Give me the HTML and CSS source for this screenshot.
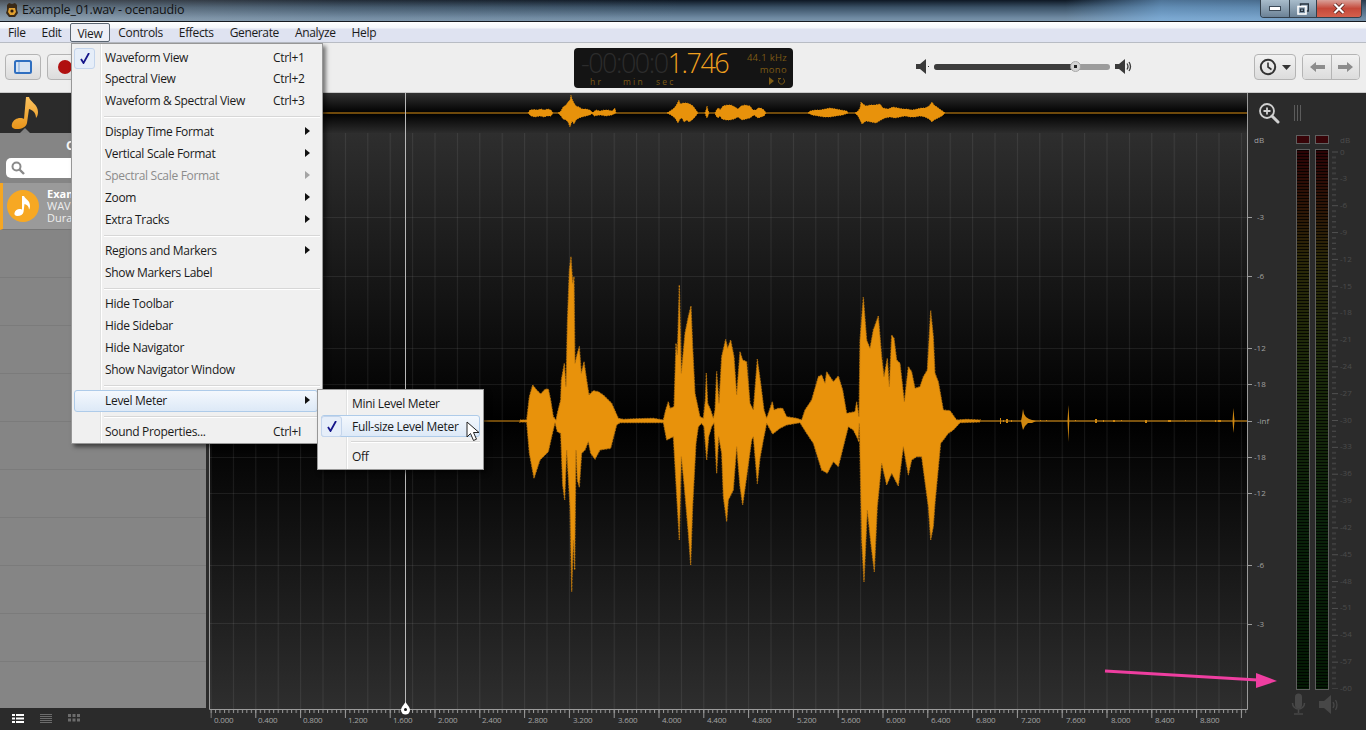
FILE: index.html
```html
<!DOCTYPE html>
<html lang="en">
<head>
<meta charset="utf-8">
<title>Example_01.wav - ocenaudio</title>
<link rel="stylesheet" href="styles.css">
</head>
<body>
<div class="app">
  <header class="titlebar">
    <svg class="app-logo" width="14" height="16" viewBox="0 0 14 16"><path d="M2 3l2-2 3 1 3-1 2 2v5l1 3-3 4H4l-3-4 1-3z" fill="#3a2a18"/><path d="M4 6h6l1 4-2 3H5l-2-3z" fill="#e0a030"/><circle cx="7" cy="9" r="1.6" fill="#2a1a10"/></svg>
    <span class="title-text">Example_01.wav - ocenaudio</span>
    <div class="win-controls">
      <div class="win-btn win-min"><svg width="12" height="6" viewBox="0 0 12 6"><rect x=".5" y=".5" width="11" height="4" fill="#fff" stroke="#3c4a58"/></svg></div>
      <div class="win-btn win-max"><svg width="12" height="12" viewBox="0 0 12 12"><path d="M3.5 3V1h8v7H9" fill="none" stroke="#26323e" stroke-width="1.4"/><rect x="1" y="3.5" width="8" height="7.5" fill="none" stroke="#fff" stroke-width="1.6"/><rect x="3.5" y="6" width="3" height="2.5" fill="none" stroke="#26323e"/></svg></div>
      <div class="win-btn win-close"><svg width="12" height="11" viewBox="0 0 12 11"><path d="M1.5 1l9 9M10.5 1l-9 9" stroke="#4a1a14" stroke-width="3.6"/><path d="M1.5 1l9 9M10.5 1l-9 9" stroke="#fff" stroke-width="2.2"/></svg></div>
    </div>
  </header>

  <nav class="menubar">
    <span class="mb-item">File</span>
    <span class="mb-item">Edit</span>
    <span class="mb-item mb-open">View</span>
    <span class="mb-item">Controls</span>
    <span class="mb-item">Effects</span>
    <span class="mb-item">Generate</span>
    <span class="mb-item">Analyze</span>
    <span class="mb-item">Help</span>
  </nav>

  <section class="toolbar">
    <button class="tb-btn tb-side"><svg width="18" height="14" viewBox="0 0 18 14"><rect x="1" y="1" width="16" height="12" rx="1.5" fill="#d8e4f2" stroke="#2f6fc0" stroke-width="2"/><path d="M5 2v10" stroke="#7aa4d8"/></svg></button>
    <button class="tb-btn tb-rec"><svg width="16" height="16" viewBox="0 0 16 16"><circle cx="8" cy="8" r="7" fill="#b01010"/></svg></button>
    <div class="timer">
      <div class="timer-main">
        <div class="timer-digits"><span class="d-dim">-00:00:0</span><span class="d-lit">1.746</span></div>
        <div class="timer-units"><span class="u-col">hr</span><span class="u-col">min</span><span>sec</span></div>
      </div>
      <div class="timer-info">
        <span>44.1 kHz</span>
        <span>mono</span>
        <svg width="18" height="8" viewBox="0 0 18 8"><path d="M0 0l5 4-5 4z" fill="#7c5a14"/><path d="M11 1.5a3 3 0 1 0 3 0M9 1.5h3" fill="none" stroke="#7c5a14"/></svg>
      </div>
    </div>
    <div class="volume">
      <svg width="14" height="15" viewBox="0 0 14 15"><path d="M0 5h4l6-5v15l-6-5H0z" fill="#3a3a3a"/><rect x="12" y="7" width="1" height="1" fill="#3a3a3a"/></svg>
      <div class="vol-track"><div class="vol-fill"></div><div class="vol-knob"></div></div>
      <svg width="17" height="15" viewBox="0 0 17 15"><path d="M0 5h4l6-5v15l-6-5H0z" fill="#3a3a3a"/><path d="M12 4.500q2 3 0 6M14 3q3 4.500 0 9" fill="none" stroke="#3a3a3a" stroke-width="1.300"/></svg>
    </div>
    <div class="tb-right">
      <button class="tb-btn tb-hist"><svg width="32" height="18" viewBox="0 0 32 18"><circle cx="9" cy="9" r="7.200" fill="none" stroke="#333" stroke-width="2"/><path d="M9 4.500V9l3.500 2.500" fill="none" stroke="#333" stroke-width="1.600"/><path d="M23 7h9l-4.500 5z" fill="#333"/></svg></button>
      <div class="nav-group">
        <button class="tb-nav"><svg width="15" height="10" viewBox="0 0 15 10"><path d="M0 5l6-5v3h9v4H6v3z" fill="#8c8c8c"/></svg></button>
        <button class="tb-nav"><svg width="15" height="10" viewBox="0 0 15 10"><path d="M15 5L9 0v3H0v4h9v3z" fill="#8c8c8c"/></svg></button>
      </div>
    </div>
  </section>

  <main class="main">
    <aside class="sidebar">
      <div class="side-head">
        <svg width="30" height="34" viewBox="0 0 30 34"><defs><linearGradient id="noteG" x1="0" y1="0" x2="0" y2="1"><stop offset="0" stop-color="#fbc360"/><stop offset="1" stop-color="#e8941a"/></linearGradient></defs><path d="M16 1h3c1 5 9 7 9 15 0 3-1 5-2 6 0-5-3-8-7-9l-2 14c-1 4-5 6-10 6-4 0-6-2-5-5 1-4 5-6 8-6 2 0 3 0 4 1z" fill="url(#noteG)"/></svg>
      </div>
      <div class="side-body">
        <div class="side-title">O</div>
        <div class="search"><svg width="14" height="14" viewBox="0 0 14 14"><circle cx="5.500" cy="5.500" r="4" fill="none" stroke="#8a8a8a" stroke-width="2"/><path d="M8.500 8.500l4.500 4.500" stroke="#8a8a8a" stroke-width="2.400"/></svg></div>
        <div class="file-row">
          <svg class="file-icon" width="32" height="32" viewBox="0 0 32 32"><circle cx="16" cy="16" r="16" fill="#f7a823"/><path d="M15 6h2c1 3 6 4 6 10 0 1.500-.5 3-1 3.500 0-3-2-5-4.500-5.500L16.500 22c-.5 2.500-3 4-6 4-2.500 0-3.500-1.500-3-3 .5-2.500 3-4 5-4 1 0 1.500 0 2.500.5z" fill="#fff"/></svg>
          <div class="file-text"><b>Exam</b><span>WAV</span><span>Dura</span></div>
        </div>
        <div class="side-list"></div>
      </div>
      <footer class="side-foot">
        <svg width="12" height="9" viewBox="0 0 12 9"><path d="M0 0h3v2H0zM4 0h8v2H4zM0 3.500h3v2H0zM4 3.500h8v2H4zM0 7h3v2H0zM4 7h8v2H4z" fill="#fff"/></svg>
        <svg width="12" height="9" viewBox="0 0 12 9"><path d="M0 .5h12M0 2.500h12M0 4.500h12M0 6.500h12M0 8.500h12" stroke="#6c6c6c"/></svg>
        <svg width="12" height="8" viewBox="0 0 12 8"><path d="M0 0h3v3H0zM4.500 0h3v3h-3zM9 0h3v3H9zM0 4.500h3v3H0zM4.500 4.500h3v3h-3zM9 4.500h3v3H9z" fill="#6c6c6c"/></svg>
      </footer>
    </aside>

    <svg class="wave" width="1039" height="637" viewBox="209 93 1039 637">
      <defs>
        <linearGradient id="navBg" x1="0" y1="0" x2="0" y2="1"><stop offset="0" stop-color="#323232"/><stop offset=".5" stop-color="#000"/><stop offset="1" stop-color="#2c2c2c"/></linearGradient>
        <linearGradient id="mainBg" x1="0" y1="0" x2="0" y2="1"><stop offset="0" stop-color="#2e2e2e"/><stop offset=".5" stop-color="#000"/><stop offset="1" stop-color="#2e2e2e"/></linearGradient>
        <pattern id="gridV" patternUnits="userSpaceOnUse" x="210.500" y="0" width="22.400" height="20"><path d="M.5 0v20" stroke="#fff" stroke-opacity=".08"/></pattern>
        <pattern id="ticksMinor" patternUnits="userSpaceOnUse" x="210.500" y="710" width="4.480" height="3"><rect width="1" height="3" fill="#9a9a9a"/></pattern>
        <pattern id="ticksMajor" patternUnits="userSpaceOnUse" x="210.500" y="710" width="44.800" height="8"><rect width="1" height="8" fill="#9a9a9a"/></pattern>
        <path id="wv" d="M0 540L20 540 28 470 38 435 50 450 62 462 75 448 85 447 92 480 100 530 108 540 112 520 122 480 124 420 133 370 138 440 142 250 148 90 153 50 158 130 162 110 165 370 172 340 178 320 184 400 192 365 200 420 207 465 220 452 235 455 250 465 275 490 295 535 310 538 350 536 400 535 430 540 437 510 445 485 450 505 462 500 468 310 472 345 478 135 484 400 495 280 505 230 513 198 518 320 525 460 540 530 550 535 556 480 559 400 563 490 572 510 580 535 585 510 590 395 597 490 605 350 617 298 623 325 632 300 642 350 650 465 660 335 668 360 680 365 690 490 700 510 712 358 722 430 732 510 740 535 757 485 762 510 775 505 788 505 800 530 830 535 845 540 855 510 875 480 895 410 905 405 915 430 920 395 940 425 955 408 968 450 980 520 1005 515 1010 485 1017 530 1020 300 1030 172 1040 300 1050 325 1060 270 1075 228 1085 350 1092 410 1102 355 1108 440 1115 285 1122 295 1130 360 1140 370 1153 485 1165 380 1175 395 1185 445 1200 440 1210 410 1222 390 1232 212 1240 290 1245 400 1255 425 1270 510 1290 512 1310 540 1340 538 1380 540L1380 546 1320 548 1300 570 1285 580 1270 600 1262 610 1245 790 1240 860 1232 900 1225 800 1205 650 1190 650 1175 660 1165 705 1150 620 1135 738 1115 700 1100 735 1085 670 1072 800 1063 995 1052 905 1042 810 1032 1025 1025 900 1018 550 1015 600 1000 570 985 560 975 600 955 680 940 665 922 700 905 690 880 610 860 580 840 548 800 555 780 565 758 582 740 550 730 600 720 655 712 730 700 590 695 600 680 710 668 795 660 740 650 620 640 750 625 780 620 845 610 770 605 640 596 590 590 700 582 548 575 560 566 590 560 660 552 560 545 550 535 560 528 610 518 800 512 975 505 880 492 730 484 650 478 900 470 765 460 590 440 600 430 548 300 548 290 555 272 625 240 630 225 658 212 640 205 605 195 630 185 640 178 742 172 720 168 630 164 990 160 900 155 1055 150 800 140 630 134 780 128 735 122 580 112 575 105 548 95 590 85 635 60 660 42 715 28 640 20 546 0 546z"/>
      </defs>
      <rect x="209" y="93" width="1039" height="637" fill="#2b2b2b"/>
      <rect x="210" y="93" width="1037" height="40" fill="url(#navBg)"/>
      <rect x="210" y="133" width="1037" height="576" fill="url(#mainBg)"/>
      <rect x="210" y="133" width="1037" height="576" fill="url(#gridV)"/>
      <path class="grid-h" d="M210 217.500h1037M210 276.500h1037M210 348.500h1037M210 384.500h1037M210 457.500h1037M210 493.500h1037M210 565.500h1037M210 623.500h1037"/>

      <path class="nav-line" d="M210 113h1037"/>
      <g class="nav-blobs">
        <path d="M528 113L530 110 534 109.500 537 110 541 109 544 110 548 109 551 110 553 113 551 116 547 116 544 117 540 116 535 117 531 116z"/>
        <path d="M558 113L561 111 563 107 566 105 568 102 570 100 571 95 572 99 574 103 576 106 579 107 582 109 586 109 590 110 593 113 590 115 586 116 582 117 579 118 576 120 574 124 572 121 570 127 568 122 566 120 563 119 561 116z"/>
        <path d="M592 113L596 110 600 111 604 110 608 110 612 111 615 108 616 113 612 115 606 116 600 115 594 116z"/>
        <path d="M667 113L670 111 673 109 675 107 677 104 679 100 680 104 683 103 687 103 690 104 693 106 696 110 698 113 695 117 692 120 689 122 687 120 684 122 682 118 680 119 678 123 675 118 671 115z"/>
        <path d="M705 113L706 110 707 106 708 110 709 113 708 116 707 118 706 116z"/>
        <path d="M715 113L717 109 719 108 720 110 723 106 727 105 731 105 735 107 738 109 741 106 745 105 750 106 753 110 756 110 758 108 761 108 764 110 766 113 764 116 761 117 758 118 754 115 750 118 746 119 742 120 738 117 734 119 730 120 726 120 722 119 720 116 718 118 716 116z"/>
        <path d="M808 113L810 111 815 110 820 110 825 109 830 108 836 109 841 110 847 111 848 113 843 115 836 116 830 117 824 117 818 116 812 115z"/>
        <path d="M855 113L858 111 860 108 861 102 863 104 866 106 870 105 875 105 880 104 883 108 888 109 893 107 898 108 903 109 907 109 912 110 917 109 921 108 925 108 929 106 932 102 934 105 937 107 941 110 944 112 945 113 942 116 938 118 934 120 932 122 929 119 925 117 920 116 915 117 910 117 905 116 900 117 895 118 890 117 885 118 881 120 876 123 871 122 866 121 862 124 860 120 858 116z"/>
      </g>

      <path class="nav-line" d="M484 421h36"/>
      <path class="wave-line" d="M520 421h727"/>
      <g transform="translate(520 240) scale(.33333)">
        <use href="#wv" class="wave-fill"/>
        <use href="#wv" class="wave-fuzz"/>
      </g>
      <path class="wave-bits" d="M961 420h1v2h-1zM964 420.500h8v1h-8zM974 420h1v2h-1zM1000 418h1v6h-1zM1003 420h1v2h-1zM1006 419h2v4h-2zM1011 420h1v2h-1zM1021 421L1022 416 1023 409 1024 414 1026 417 1029 419 1032 420 1036 421 1032 423 1028 423 1025 426 1023 430 1022 426zM1040 420h1v1h-1zM1046 420h1v1h-1zM1067.500 421L1068.400 405 1069.300 421 1068.400 442zM1075 420h1v1h-1zM1095 419h2v4h-2zM1103 420h1v2h-1zM1113 420h2v2h-2zM1121 420h1v1h-1zM1145 420h2v3h-2zM1168 420h3v2h-3zM1185 420h1v1h-1zM1200 420h1v1h-1zM1215 420h1v2h-1zM1218 420h3v2h-3zM1232.500 421L1233.400 408 1234.500 421 1233.400 433z"/>

      <path class="axis" d="M209.500 93v616.500h1038M1247.500 93v616.500"/>
      <rect x="210.500" y="710" width="1036" height="3" fill="url(#ticksMinor)"/>
      <rect x="210.500" y="710" width="1036" height="8" fill="url(#ticksMajor)"/>

      <g class="ruler-text">
        <text x="214" y="723">0.000</text><text x="258" y="723">0.400</text><text x="303" y="723">0.800</text><text x="348" y="723">1.200</text><text x="393" y="723">1.600</text><text x="438" y="723">2.000</text><text x="482" y="723">2.400</text><text x="528" y="723">2.800</text><text x="573" y="723">3.200</text><text x="618" y="723">3.600</text><text x="662" y="723">4.000</text><text x="707" y="723">4.400</text><text x="752" y="723">4.800</text><text x="797" y="723">5.200</text><text x="841" y="723">5.600</text><text x="886" y="723">6.000</text><text x="931" y="723">6.400</text><text x="976" y="723">6.800</text><text x="1021" y="723">7.200</text><text x="1066" y="723">7.600</text><text x="1111" y="723">8.000</text><text x="1155" y="723">8.400</text><text x="1200" y="723">8.800</text>
      </g>

      <path class="playhead" d="M405.500 93v610"/>
      <path d="M405.500 702c3 4 4.500 6 4.500 8a4.500 4.500 0 0 1-9 0c0-2 1.500-4 4.500-8z" fill="#fff"/>
      <circle cx="405.500" cy="709.500" r="1.500" fill="#111"/>
    </svg>

    <aside class="meter">
      <div class="meter-tools">
        <svg width="22" height="22" viewBox="0 0 22 22"><circle cx="9" cy="9" r="7" fill="none" stroke="#d0d0d0" stroke-width="1.800"/><path d="M9 5.500v7M5.500 9h7" stroke="#d0d0d0" stroke-width="1.800"/><path d="M14 14l6 6" stroke="#d0d0d0" stroke-width="3" stroke-linecap="round"/></svg>
        <svg width="7" height="16" viewBox="0 0 7 16"><path d="M.5 0v16M3.500 0v16M6.500 0v16" stroke="#5c5c5c"/></svg>
      </div>
      <svg class="meter-svg" width="118" height="597" viewBox="1248 133 118 597">
        <defs>
          <linearGradient id="ledG" x1="0" y1="0" x2="0" y2="1"><stop offset="0" stop-color="#2c0306"/><stop offset=".1" stop-color="#2e1406"/><stop offset=".2" stop-color="#2c2808"/><stop offset=".4" stop-color="#1c2a0a"/><stop offset=".7" stop-color="#0a220a"/><stop offset="1" stop-color="#041a04"/></linearGradient>
          <pattern id="ledStripes" patternUnits="userSpaceOnUse" x="0" y="150" width="10" height="3"><rect width="10" height="1" fill="#000" fill-opacity=".8"/></pattern>
          <pattern id="scaleTicks" patternUnits="userSpaceOnUse" x="1332" y="151.500" width="8" height="26.850"><path d="M0 .5h6M0 5.870h4M0 11.240h4M0 16.610h4M0 21.980h4" stroke="#505050"/></pattern>
        </defs>
        <path class="tick-l" d="M1248 217.500h4M1248 276.500h4M1248 348.500h4M1248 384.500h4M1248 421.500h4M1248 457.500h4M1248 493.500h4M1248 565.500h4M1248 624.500h4"/>
        <g class="db-l">
          <text x="1254" y="143">dB</text><text x="1257" y="220">-3</text><text x="1257" y="279">-6</text><text x="1254" y="351">-12</text><text x="1254" y="387">-18</text><text x="1257" y="424">-inf</text><text x="1254" y="460">-18</text><text x="1254" y="496">-12</text><text x="1257" y="568">-6</text><text x="1257" y="627">-3</text>
        </g>
        <rect class="clip" x="1296.500" y="135.500" width="13" height="8"/>
        <rect class="clip" x="1315.500" y="135.500" width="13" height="8"/>
        <rect class="bar" x="1296.500" y="149.500" width="13" height="540" fill="url(#ledG)"/>
        <rect class="bar" x="1315.500" y="149.500" width="13" height="540" fill="url(#ledG)"/>
        <rect x="1297" y="150" width="12" height="539" fill="url(#ledStripes)"/>
        <rect x="1316" y="150" width="12" height="539" fill="url(#ledStripes)"/>
        <rect x="1332" y="151" width="8" height="538" fill="url(#scaleTicks)"/>
        <g class="db-r">
          <text x="1340" y="143">dB</text><text x="1340" y="155">0</text><text x="1340" y="181">-3</text><text x="1340" y="208">-6</text><text x="1340" y="235">-9</text><text x="1340" y="262">-12</text><text x="1340" y="289">-15</text><text x="1340" y="315">-18</text><text x="1340" y="342">-21</text><text x="1340" y="369">-24</text><text x="1340" y="396">-27</text><text x="1340" y="423">-30</text><text x="1340" y="449">-33</text><text x="1340" y="476">-36</text><text x="1340" y="503">-39</text><text x="1340" y="530">-42</text><text x="1340" y="557">-45</text><text x="1340" y="584">-48</text><text x="1340" y="610">-51</text><text x="1340" y="637">-54</text><text x="1340" y="664">-57</text><text x="1340" y="691">-60</text>
        </g>
        <path d="M1295 697a3.500 3.500 0 0 1 7 0v8a3.500 3.500 0 0 1-7 0z" fill="#474747"/>
        <path d="M1292.500 703a6 6 0 0 0 12 0M1298.500 709v4M1294 714h9" fill="none" stroke="#474747" stroke-width="1.500"/>
        <path d="M1319 701h5l7-6v19l-7-6h-5z" fill="#474747"/>
        <path d="M1333 702q2 3 0 6M1335.500 700q3 5 0 10" fill="none" stroke="#474747" stroke-width="1.300"/>
      </svg>
    </aside>
  </main>

  <div class="menu menu-view">
    <div class="mi"><span class="mi-check"><svg width="10" height="11" viewBox="0 0 10 11"><path d="M1 6l2.500 4L9 0" fill="none" stroke="#16168a" stroke-width="1.800"/></svg></span><span class="mi-label">Waveform View</span><span class="mi-key">Ctrl+1</span></div>
    <div class="mi"><span class="mi-gap"></span><span class="mi-label">Spectral View</span><span class="mi-key">Ctrl+2</span></div>
    <div class="mi"><span class="mi-gap"></span><span class="mi-label">Waveform &amp; Spectral View</span><span class="mi-key">Ctrl+3</span></div>
    <div class="sep"></div>
    <div class="mi"><span class="mi-gap"></span><span class="mi-label">Display Time Format</span><span></span><i class="arrow"></i></div>
    <div class="mi"><span class="mi-gap"></span><span class="mi-label">Vertical Scale Format</span><span></span><i class="arrow"></i></div>
    <div class="mi mi-off"><span class="mi-gap"></span><span class="mi-label">Spectral Scale Format</span><span></span><i class="arrow"></i></div>
    <div class="mi"><span class="mi-gap"></span><span class="mi-label">Zoom</span><span></span><i class="arrow"></i></div>
    <div class="mi"><span class="mi-gap"></span><span class="mi-label">Extra Tracks</span><span></span><i class="arrow"></i></div>
    <div class="sep"></div>
    <div class="mi"><span class="mi-gap"></span><span class="mi-label">Regions and Markers</span><span></span><i class="arrow"></i></div>
    <div class="mi"><span class="mi-gap"></span><span class="mi-label">Show Markers Label</span></div>
    <div class="sep"></div>
    <div class="mi"><span class="mi-gap"></span><span class="mi-label">Hide Toolbar</span></div>
    <div class="mi"><span class="mi-gap"></span><span class="mi-label">Hide Sidebar</span></div>
    <div class="mi"><span class="mi-gap"></span><span class="mi-label">Hide Navigator</span></div>
    <div class="mi"><span class="mi-gap"></span><span class="mi-label">Show Navigator Window</span></div>
    <div class="sep"></div>
    <div class="mi mi-hot"><span class="mi-gap"></span><span class="mi-label">Level Meter</span><span></span><i class="arrow"></i></div>
    <div class="sep"></div>
    <div class="mi"><span class="mi-gap"></span><span class="mi-label">Sound Properties...</span><span class="mi-key">Ctrl+I</span></div>
  </div>

  <div class="menu menu-sub">
    <div class="mi"><span class="mi-gap"></span><span class="mi-label">Mini Level Meter</span></div>
    <div class="mi mi-hot"><span class="mi-check"><svg width="10" height="11" viewBox="0 0 10 11"><path d="M1 6l2.500 4L9 0" fill="none" stroke="#16168a" stroke-width="1.800"/></svg></span><span class="mi-label">Full-size Level Meter</span></div>
    <div class="sep"></div>
    <div class="mi"><span class="mi-gap"></span><span class="mi-label">Off</span></div>
  </div>

  <svg class="cursor" width="14" height="21" viewBox="0 0 14 21"><path d="M1 1v15l3.500-3.500 3 7 3-1.300-3-6.700H13z" fill="#fff" stroke="#222"/></svg>
  <svg class="pink-arrow" width="174" height="24" viewBox="0 0 174 24"><path d="M1 4l153 9" stroke="#ee3ea0" stroke-width="3"/><path d="M152 6l21 8-21 7z" fill="#ee3ea0"/></svg>
</div>
</body>
</html>
```

FILE: styles.css
```css
* { box-sizing: border-box; }
html, body { margin: 0; padding: 0; height: 100%; overflow: hidden; background: #2b2b2b; }
body { font-family: "Open Sans", "Noto Sans", sans-serif; font-size: 12px; color: #1a1a1a; }
svg { display: block; flex: none; }
button { padding: 0; font: inherit; }

.app { position: relative; width: 1366px; height: 730px; display: flex; flex-direction: column; overflow: hidden; }

/* title bar */
.titlebar {
  height: 22px; flex: none; display: flex; align-items: center; padding-left: 5px;
  border-bottom: 1px solid #15191f;
  background:
    linear-gradient(90deg, rgba(190,190,190,.35) 0, rgba(150,160,170,.15) 25%, rgba(0,0,0,0) 50%, rgba(120,190,250,0) 78%, rgba(130,190,245,.55) 85%, rgba(130,190,245,.5) 92%, rgba(100,130,160,.3) 100%),
    linear-gradient(180deg, #0e1824 0, #3a5166 35%, #6f8aa2 85%, #7a94aa 100%);
}
.app-logo { margin-right: 3px; margin-top: -2px; }
.title-text { font-size: 12.5px; letter-spacing: -.2px; color: #111; margin-top: -2px; }
.win-controls { margin-left: auto; margin-right: 4px; align-self: flex-start; display: flex; height: 18px; border: 1px solid #33404c; border-top: 0; border-radius: 0 0 4px 4px; overflow: hidden; }
.win-btn { display: flex; align-items: center; justify-content: center; height: 17px; border-right: 1px solid #33404c; }
.win-min { width: 29px; background: linear-gradient(180deg, #a8bccb, #6c8296); }
.win-max { width: 27px; background: linear-gradient(180deg, #a8bccb, #6c8296); }
.win-close { width: 44px; border-right: 0; background: linear-gradient(180deg, #d9a199 0, #c5493a 50%, #d4604c 100%); }

/* menu bar */
.menubar {
  height: 21px; flex: none; display: flex; align-items: center;
  border-bottom: 1px solid #b8bcc4;
  background: linear-gradient(180deg, #fff 0, #f4f6fa 30%, #dfe3f1 35%, #dfe3f1 100%);
}
.mb-item { padding: 0 8px; line-height: 19px; height: 19px; letter-spacing: -.35px; margin-top: 1px; white-space: nowrap; }
.mb-open { border: 1px solid #5b6672; border-radius: 2px; background: #eef0f6; padding: 0 7px; }

/* toolbar */
.toolbar { height: 50px; flex: none; display: flex; align-items: center; padding: 0 0 2px 5px; background: #eeeeee; border-bottom: 1px solid #c9c9c9; }
.tb-btn { display: flex; align-items: center; justify-content: center; height: 26px; border: 1px solid #b4b4b4; border-radius: 4px; background: linear-gradient(180deg, #f2f2f2, #dcdcdc); }
.tb-side { width: 36px; }
.tb-rec { width: 36px; margin-left: 6px; }
.timer { width: 219px; height: 40px; margin-left: 491px; margin-top: 2px; padding: 0 6px 0 7px; display: flex; justify-content: space-between; border-radius: 4px; background: #141414; }
.timer-main { display: flex; flex-direction: column; }
.timer-digits { height: 29px; font-size: 27px; font-weight: 300; line-height: 29px; letter-spacing: -1.5px; white-space: nowrap; }
.d-dim { color: #2c2c2c; }
.d-lit { color: #f0a01e; }
.timer-units { display: flex; font-size: 8.5px; line-height: 9px; letter-spacing: 2.2px; color: #7c5a14; padding-left: 9px; }
.u-col { width: 33px; }
.timer-info { display: flex; flex-direction: column; align-items: flex-end; padding-top: 4px; font-size: 9.5px; line-height: 12px; letter-spacing: .3px; color: #7c5a14; }
.timer-info svg { margin-top: 1px; }
.volume { margin-left: 123px; display: flex; align-items: center; gap: 4px; }
.vol-track { position: relative; width: 176px; height: 6px; margin-right: 1px; border-radius: 3px; background: #9c9c9c; }
.vol-fill { width: 141px; height: 6px; border-radius: 3px; background: #3c3c3c; }
.vol-knob { position: absolute; left: 136px; top: -3px; width: 11px; height: 11px; border-radius: 50%; border: 1px solid #a6a6a6; background: radial-gradient(circle, #222 0 1.500px, #d4d4d4 2px); }
.tb-right { margin-left: auto; padding-right: 6px; display: flex; align-items: center; gap: 6px; }
.tb-hist { width: 42px; }
.nav-group { display: flex; height: 26px; border: 1px solid #b4b4b4; border-radius: 4px; overflow: hidden; }
.tb-nav { width: 28px; display: flex; align-items: center; justify-content: center; border: 0; background: linear-gradient(180deg, #f2f2f2, #dcdcdc); }
.tb-nav + .tb-nav { border-left: 1px solid #b4b4b4; }

/* main */
.main { flex: 1; display: flex; min-height: 0; background: #2b2b2b; }
.sidebar { width: 209px; flex: none; display: flex; flex-direction: column; background: #2b2b2b; }
.side-head { position: relative; height: 40px; flex: none; display: flex; justify-content: flex-start; align-items: center; padding-left: 10px; background: #2b2b2b; margin-right: 3px; }
.side-head::after { content: ""; position: absolute; left: 20px; bottom: 0; border: 5px solid transparent; border-top: 0; border-bottom-color: #828282; }
.side-body { flex: 1; display: flex; flex-direction: column; margin-right: 3px; background: #858585; min-height: 0; }
.side-title { height: 25px; flex: none; line-height: 25px; padding-left: 66px; font-weight: 700; color: #f4f4f4; }
.search { height: 20px; flex: none; margin: 0 6px; padding: 3px 5px; border-radius: 5px; background: #fff; }
.file-row { height: 47px; flex: none; margin-top: 5px; display: flex; align-items: center; gap: 8px; padding-left: 7px; border-left: 3px solid #f5a623; border-bottom: 1px solid #777; background: #9a9a9a; }
.file-icon { margin-left: -3px; }
.file-text { display: flex; flex-direction: column; font-size: 11px; line-height: 12px; color: #eeeeee; }
.file-text b { color: #fff; }
.side-list { flex: 1; background: repeating-linear-gradient(180deg, #858585 0, #858585 47px, #7b7b7b 47px, #7b7b7b 48px); }
.side-foot { height: 22px; flex: none; display: flex; align-items: center; gap: 16px; padding: 0 0 2px 12px; background: #2b2b2b; margin-right: -3px; }

.wave { flex: none; }
.grid-h { stroke: #fff; stroke-opacity: .08; fill: none; }
.nav-line { stroke: #94620f; stroke-width: 1.600; fill: none; }
.nav-blobs path { fill: #e8920b; stroke: #e8920b; stroke-width: 1; stroke-dasharray: .8 1.700; }
.wave-line { stroke: #a36e14; stroke-width: 1.300; fill: none; }
.wave-fill { fill: #e8920b; stroke: #a86c10; stroke-width: 1.500; }
.wave-fuzz { fill: none; stroke: #d08410; stroke-width: 4; stroke-dasharray: 1.500 7; }
.wave-bits { fill: #d08810; }
.axis { fill: none; stroke: #9a9a9a; }
.ruler-text text { font-family: "Open Sans", sans-serif; font-size: 8px; letter-spacing: -.2px; fill: #a4a4a4; }
.playhead { stroke: #b8b8b8; fill: none; }

.meter { flex: 1; display: flex; flex-direction: column; background: #2b2b2b; }
.meter-tools { height: 40px; flex: none; display: flex; align-items: center; gap: 14px; padding: 0 0 0 10px; }
.tick-l { stroke: #9a9a9a; fill: none; }
.db-l text { font-family: "Open Sans", sans-serif; font-size: 8px; fill: #a0a0a0; }
.db-r text { font-family: "Open Sans", sans-serif; font-size: 8px; fill: #4c4c4c; }
.clip { fill: #380408; stroke: #5e5e5e; }
.bar { stroke: #5e5e5e; }

/* menus */
.menu { position: absolute; background: #f0f0f0; border: 1px solid #979797; box-shadow: 3px 3px 4px rgba(0,0,0,.5); color: #1a1a1a; }
.menu-view { left: 71px; top: 43px; width: 252px; height: 401px; padding: 2px 2px 0; background: linear-gradient(90deg, #f0f0f0 0, #f0f0f0 28px, #e0e1e1 28px, #e0e1e1 29px, #fff 29px, #fff 30px, #f0f0f0 30px); }
.menu-sub { left: 317px; top: 389px; width: 167px; height: 81px; padding: 3px 3px 0; background: linear-gradient(90deg, #f0f0f0 0, #f0f0f0 28px, #e0e1e1 28px, #e0e1e1 29px, #fff 29px, #fff 30px, #f0f0f0 30px); }
.mi { position: relative; height: 22px; padding-bottom: 2px; display: grid; grid-template-columns: 31px 168px 32px 8px; align-items: center; white-space: nowrap; letter-spacing: -.31px; }
.menu-sub .mi { grid-template-columns: 31px 1fr; }
.mi-gap { display: block; }
.mi-check { width: 21px; height: 21px; margin-top: 2px; display: flex; align-items: center; justify-content: center; border: 1px solid #c4d5ec; border-radius: 3px; background: #e6eef9; }
.mi-off { color: #8c8c8c; }
.mi-hot { border: 1px solid #aecbe9; border-radius: 3px; background: linear-gradient(180deg, #f4f8fd, #dde9f7); margin-right: 2px; padding-bottom: 2px; grid-template-columns: 30px 168px 32px 8px; }
.menu-sub .mi-hot { margin-right: 0; grid-template-columns: 30px 1fr; }
.menu-sub .mi-hot .mi-check { margin: 0 0 0 -1px; }
.arrow { display: block; width: 0; height: 0; border-left: 5px solid #111; border-top: 4px solid transparent; border-bottom: 4px solid transparent; }
.mi-off .arrow { border-left-color: #a4a4a4; }
.sep { height: 9px; margin-left: 30px; background: linear-gradient(180deg, transparent 0, transparent 4px, #d7d7d7 4px, #d7d7d7 5px, #fff 5px, #fff 6px, transparent 6px); }

.cursor { position: absolute; left: 466px; top: 421px; }
.pink-arrow { position: absolute; left: 1104px; top: 667px; }
```
